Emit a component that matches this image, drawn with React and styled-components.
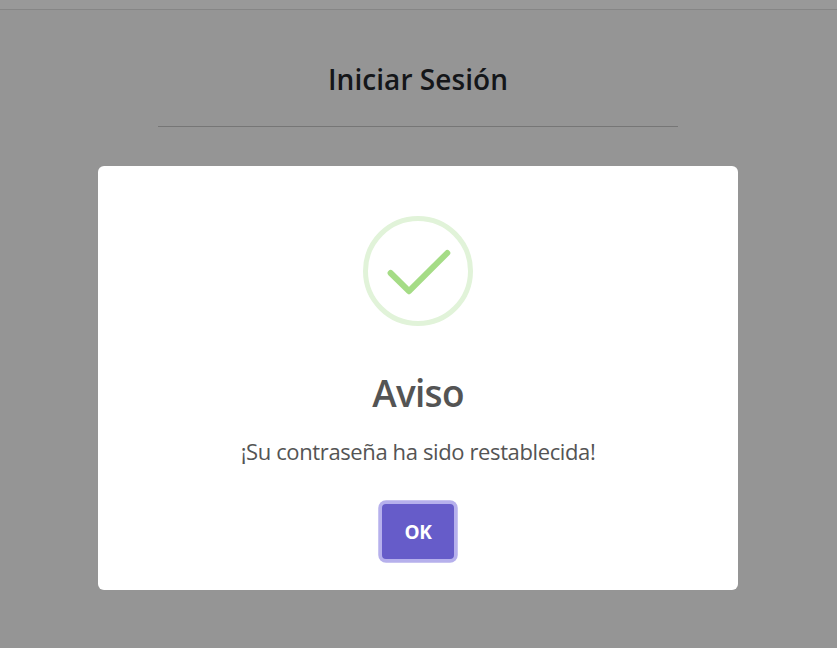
import React from "react";
import styled, { createGlobalStyle } from "styled-components";

const GlobalStyle = createGlobalStyle`
  * { box-sizing: border-box; }
  body { margin: 0; overflow: hidden; background: #959595; font-family: "Segoe UI", "Open Sans", "Noto Sans", sans-serif; }
`;

const Page = styled.div`
  position: relative;
  height: 648px;
`;

const TopBar = styled.header`
  height: 10px;
  background: #999999;
  border-bottom: 1px solid #868686;
`;

const LoginSection = styled.main`
  padding: 49px 1px 0 0;
  display: flex;
  flex-direction: column;
  align-items: center;
`;

const PageTitle = styled.h1`
  margin: 0;
  height: 67px;
  line-height: 40px;
  font-size: 28px;
  font-weight: 600;
  letter-spacing: 0.05px;
  color: #141619;
`;

const Divider = styled.hr`
  margin: 0;
  border: 0;
  width: 520px;
  height: 1px;
  background: #767676;
`;

const Overlay = styled.div`
  position: absolute;
  inset: 0 1px 0 0;
  display: flex;
  justify-content: center;
  align-items: flex-start;
  padding-top: 166px;
`;

const Modal = styled.section`
  width: 640px;
  height: 424px;
  padding-top: 50px;
  border-radius: 6px;
  background: #fff;
  display: flex;
  flex-direction: column;
  align-items: center;
`;

const ModalTitle = styled.h2`
  margin: 41px 0 0;
  line-height: 52px;
  font-size: 37px;
  font-weight: 600;
  letter-spacing: -0.7px;
  color: #545454;
`;

const Message = styled.p`
  margin: 16px 0 0;
  line-height: 32px;
  font-size: 22px;
  letter-spacing: -0.38px;
  color: #545454;
`;

const OkButton = styled.button`
  width: 72px;
  height: 55px;
  margin-top: 37px;
  padding: 1px 0 0;
  border: 0;
  border-radius: 4px;
  background: #665cc9;
  box-shadow: 0 0 0 3.75px #b6b0ec;
  color: #fff;
  font: 700 19px "Segoe UI", "Open Sans", sans-serif;
  letter-spacing: -0.3px;
`;

const SuccessIcon = () => (
  <svg width="110" height="110" viewBox="0 0 110 110" fill="none">
    <circle cx="55" cy="55" r="52.5" stroke="#e1f3d9" strokeWidth="5" />
    <path d="M27.6 57 L46 75.2 L84.3 37" stroke="#a5dc86" strokeWidth="6" strokeLinecap="round" strokeLinejoin="round" />
  </svg>
);

export default function App() {
  return (
    <Page>
      <GlobalStyle />
      <TopBar />
      <LoginSection>
        <PageTitle>Iniciar Sesión</PageTitle>
        <Divider />
      </LoginSection>
      <Overlay>
        <Modal role="dialog" aria-label="Aviso">
          <SuccessIcon />
          <ModalTitle>Aviso</ModalTitle>
          <Message>¡Su contraseña ha sido restablecida!</Message>
          <OkButton>OK</OkButton>
        </Modal>
      </Overlay>
    </Page>
  );
}
